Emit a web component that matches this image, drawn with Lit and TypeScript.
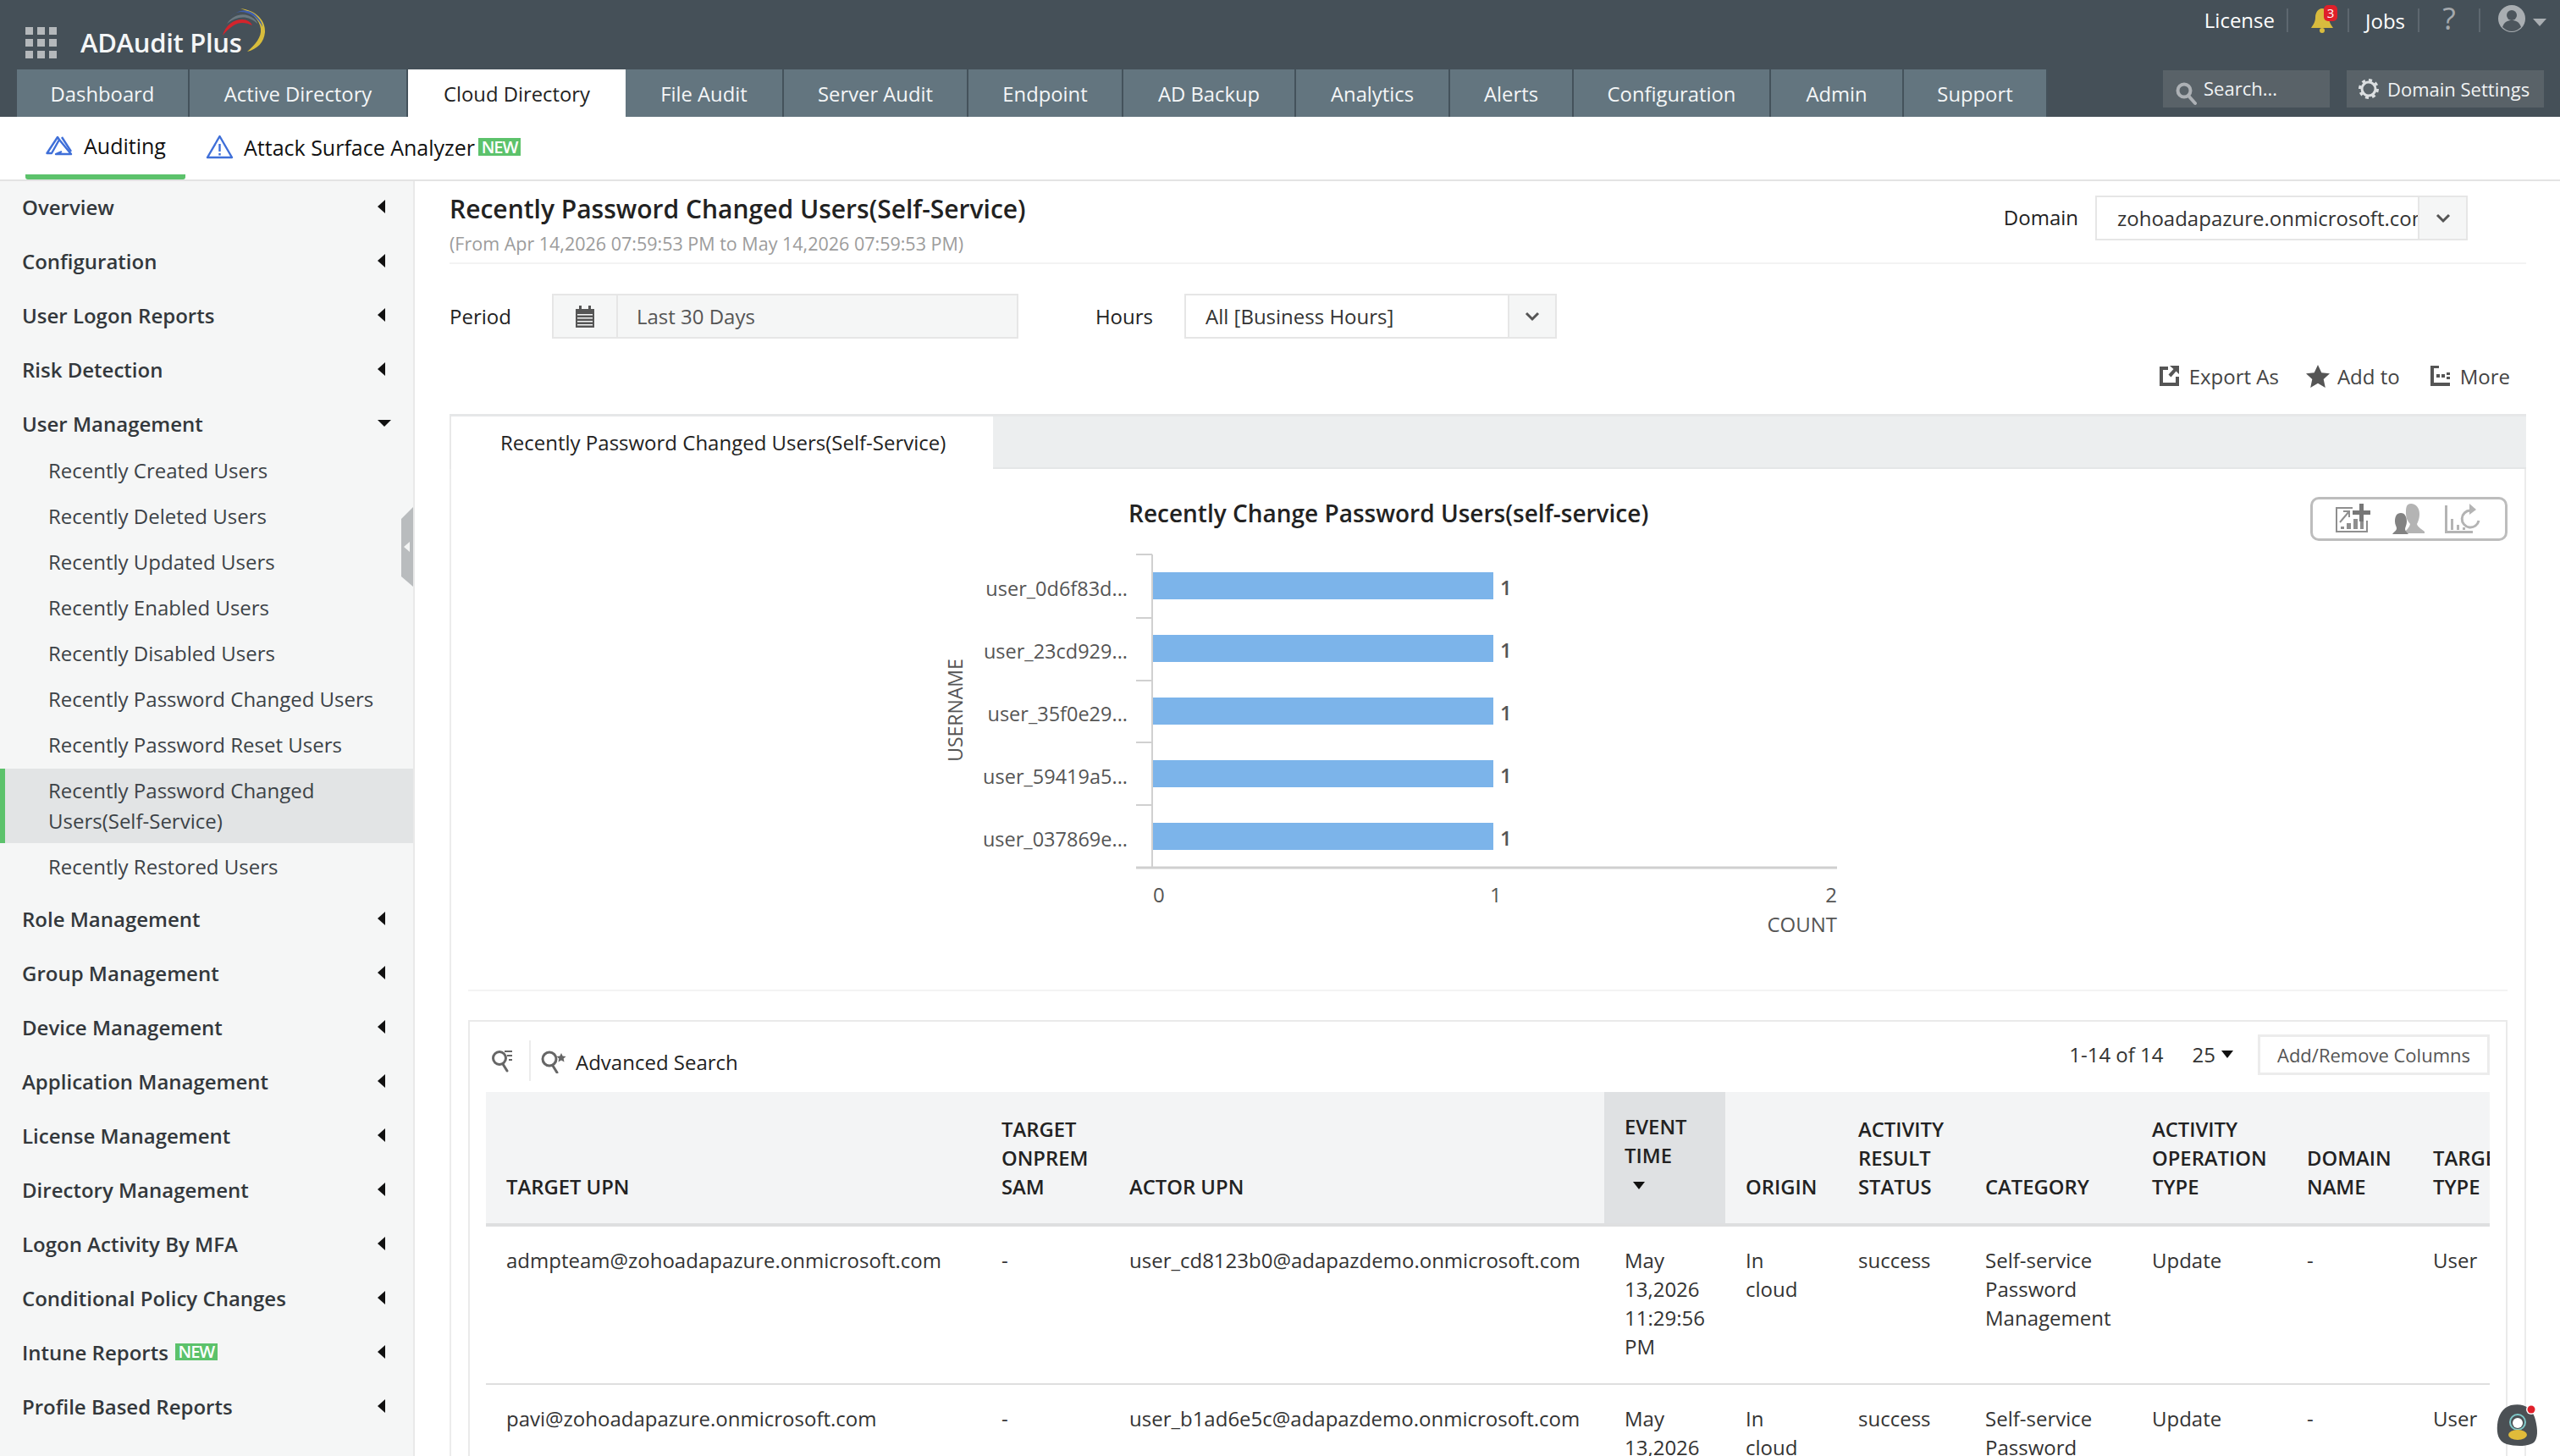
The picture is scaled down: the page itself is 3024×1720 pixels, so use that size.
import { LitElement, html, css, svg } from 'lit';
import { customElement } from 'lit/decorators.js';

const topTabs = ['Dashboard', 'Active Directory', 'Cloud Directory', 'File Audit', 'Server Audit', 'Endpoint', 'AD Backup', 'Analytics', 'Alerts', 'Configuration', 'Admin', 'Support'];
const groupsBefore = ['Overview', 'Configuration', 'User Logon Reports', 'Risk Detection'];
const subItems = ['Recently Created Users', 'Recently Deleted Users', 'Recently Updated Users', 'Recently Enabled Users', 'Recently Disabled Users', 'Recently Password Changed Users', 'Recently Password Reset Users'];
const groupsAfter = ['Role Management', 'Group Management', 'Device Management', 'Application Management', 'License Management', 'Directory Management', 'Logon Activity By MFA', 'Conditional Policy Changes', 'Intune Reports', 'Profile Based Reports'];
const bars = [
  { name: 'user_0d6f83d...', y: 676 },
  { name: 'user_23cd929...', y: 750 },
  { name: 'user_35f0e29...', y: 824 },
  { name: 'user_59419a5...', y: 898 },
  { name: 'user_037869e...', y: 972 },
];
const rows = [
  { upn: 'admpteam@zohoadapazure.onmicrosoft.com', actor: 'user_cd8123b0@adapazdemo.onmicrosoft.com' },
  { upn: 'pavi@zohoadapazure.onmicrosoft.com', actor: 'user_b1ad6e5c@adapazdemo.onmicrosoft.com' },
];

@customElement('app-root')
export class AppRoot extends LitElement {
  static styles = css`
    :host {
      display: block;
      width: 3024px;
      height: 1720px;
      overflow: hidden;
      position: relative;
      background: #fff;
      font-family: 'Open Sans', sans-serif;
      font-size: 24px;
      color: #333;
    }
    svg { display: block; flex: none; }

    .header { height: 138px; background: #455058; display: flex; flex-direction: column; }
    .brand-row { height: 82px; display: flex; }
    .grid-icon { margin: 32px 0 0 30px; }
    .logo { display: flex; margin-left: 28px; position: relative; }
    .logo-text { font-size: 31px; font-weight: 600; color: #f4f6f7; margin-top: 29px; line-height: 42px; letter-spacing: -0.3px; }
    .logo svg { margin: 8px 0 0 -24px; }
    .tools { margin-left: auto; display: flex; align-items: flex-start; height: 44px; color: #fff; font-size: 24px; }
    .tool { height: 28px; margin-top: 10px; display: flex; align-items: center; border-right: 2px solid #5d676f; }
    .license { padding-right: 14px; line-height: 24px; }
    .bell { width: 72px; padding-left: 26px; box-sizing: border-box; position: relative; }
    .bell-badge { position: absolute; left: 42px; top: -4px; width: 16px; height: 19px; background: #e0202a; border-radius: 5px; color: #fff; font-size: 15px; line-height: 19px; text-align: center; }
    .jobs { width: 83px; padding-left: 19px; box-sizing: border-box; }
    .help { width: 72px; justify-content: center; color: #a4a9ad; font-size: 36px; line-height: 28px; padding-bottom: 4px; box-sizing: border-box; }
    .avatar { margin: 6px 0 0 21px; }
    .caret { margin: 22px 16px 0 9px; }

    .tabs-row { height: 56px; display: flex; }
    .tabs { margin-left: 20px; display: grid; grid-template-columns: 204px 258px 257px 187px 218px 183px 204px 182px 146px 233px 157px 170px; }
    .tab { background: #63757f; border-right: 2px solid #44525b; color: #f4f6f7; font-size: 23.8px; display: flex; align-items: center; justify-content: center; padding-top: 2px; box-sizing: border-box; }
    .tab.on { background: #fff; color: #222; border-right: none; }
    .top-actions { margin-left: auto; display: flex; gap: 20px; padding: 1px 19px 0 0; }
    .top-btn { height: 44px; background: #596268; display: flex; align-items: center; color: #f1f3f4; font-size: 22px; }
    .top-search { width: 197px; padding-left: 15px; box-sizing: border-box; gap: 8px; }
    .top-search span { margin-top: -2px; }
    .top-domain { width: 233px; padding-left: 14px; box-sizing: border-box; gap: 10px; }

    .subnav { height: 76px; box-sizing: border-box; border-bottom: 2px solid #e3e3e3; display: flex; padding-left: 30px; position: relative; }
    .sub-tab { display: flex; align-items: center; gap: 13px; font-weight: 500; color: #111; font-size: 25px; height: 74px; padding-bottom: 3px; box-sizing: border-box; }
    .sub-tab.on { width: 189px; padding-left: 24px; border-bottom: 6px solid #5cc26b; border-radius: 0 0 3px 3px; padding-bottom: 0; }
    .sub-tab.second { margin-left: 24px; gap: 12px; }
    .new { display: inline-block; background: #5cc26b; color: #fff; font-weight: 600; font-size: 20px; line-height: 21px; height: 21px; width: 50px; text-align: center; letter-spacing: -1px; }
    .sub-tab .new { margin-left: -8px; }

    .body { display: flex; height: 1506px; }
    .sidebar { width: 488px; flex: none; background: #f5f6f6; border-right: 2px solid #e9e9e9; position: relative; }
    .nav { margin-top: -2px; }
    .group { height: 64px; display: flex; align-items: center; padding: 0 33px 0 26px; font-weight: 600; font-size: 24px; color: #33383c; }
    .group .new { margin-left: 8px; height: 20px; line-height: 20px; }
    .arrow-left { margin-left: auto; width: 0; height: 0; border-style: solid; border-width: 8px 9px 8px 0; border-color: transparent #111 transparent transparent; }
    .arrow-down { margin: 0 -7px 0 auto; width: 0; height: 0; border-style: solid; border-width: 8px 8px 0; border-color: #111 transparent transparent; }
    .subs { margin: -3px 0 2px; }
    .sub { height: 54px; box-sizing: border-box; padding: 0 0 2px 57px; display: flex; align-items: center; color: #3c4247; font-size: 24px; }
    .sub.sel { height: 88px; margin: 1px 0; background: #e2e4e5; border-left: 6px solid #5cc26b; padding: 0 0 0 51px; line-height: 36px; }
    .handle { position: absolute; right: 0; top: 385px; }

    .main { flex: 1; padding: 0 40px 0 41px; min-width: 0; }
    .head { display: flex; height: 98px; box-sizing: border-box; border-bottom: 2px solid #f3f3f3; }
    .title { font-size: 30px; font-weight: 600; color: #222; line-height: 36px; margin-top: 15px; }
    .range { font-size: 21.5px; color: #9c9c9c; line-height: 30px; margin-top: 8px; }
    .domain { margin-left: auto; display: flex; align-items: flex-start; padding: 17px 69px 0 0; }
    .domain label { line-height: 52px; margin-right: 20px; color: #222; }
    .select { display: flex; height: 53px; box-sizing: border-box; border: 2px solid #e6e6e6; background: #fff; }
    .select .val { flex: 1; overflow: hidden; white-space: nowrap; line-height: 49px; }
    .select .drop { background: #f5f6f6; border-left: 2px solid #e6e6e6; display: flex; align-items: center; justify-content: center; }
    .domain .select { width: 440px; }
    .domain .val { padding-left: 24px; color: #333; }
    .domain .drop { width: 55px; flex: none; }

    .filters { display: flex; align-items: center; margin-top: 35px; height: 53px; }
    .filters label { color: #222; }
    .period { width: 551px; margin-left: 48px; background: #f5f6f6; }
    .cal { width: 74px; display: flex; align-items: center; justify-content: center; border-right: 2px solid #e6e6e6; }
    .period .val { padding-left: 22px; color: #555; }
    .hours-label { margin-left: 91px; }
    .hours { width: 440px; margin-left: 37px; }
    .hours .val { padding-left: 23px; color: #333; }
    .hours .drop { width: 54px; flex: none; }

    .actions { display: flex; justify-content: flex-end; align-items: center; height: 34px; margin-top: 27px; padding-right: 19px; color: #444; }
    .action { display: flex; align-items: center; gap: 12px; margin-left: 32px; }
    .action.tight { gap: 9px; }
    .action.last { margin-left: 36px; }

    .report-tabs { margin-top: 28px; height: 65px; box-sizing: border-box; background: #eceeef; border-top: 3px solid #e6e7e8; border-bottom: 2px solid #e4e6e7; display: flex; }
    .report-tab { width: 642px; height: 63px; box-sizing: border-box; background: #fff; border-left: 2px solid #e8e8e8; padding: 0 0 3px 58px; display: flex; align-items: center; color: #222; margin-bottom: -3px; font-size: 24px; }
    .panel { border: solid #ececec; border-width: 0 2px; height: 1200px; position: relative; }

    .chart { height: 617px; margin: 0 20px; box-sizing: border-box; border-bottom: 2px solid #f3f3f3; padding-top: 34px; }
    .chart-title { font-size: 28px; font-weight: 600; color: #222; line-height: 36px; padding-left: 780px; white-space: nowrap; }
    .chart svg { margin: 16px 0 0 537px; }
    .chart text { font-family: 'Open Sans', sans-serif; fill: #555; font-size: 24px; }
    .chart text.name { font-size: 23.5px; }
    .chart-tools { position: absolute; top: 33px; right: 20px; width: 233px; height: 52px; box-sizing: border-box; border: 3px solid #bdbdbd; border-radius: 10px; display: flex; align-items: center; justify-content: center; gap: 24px; padding-right: 4px; }

    .grid-box { margin: 34px 20px 0; border: 2px solid #eaeaea; padding: 0 19px; }
    .toolbar { height: 83px; display: flex; align-items: center; }
    .search-ic { margin-left: 6px; height: 48px; padding-right: 19px; border-right: 2px solid #ececec; display: flex; align-items: center; margin-top: 8px; }
    .adv { display: flex; align-items: center; gap: 10px; margin: 11px 0 0 11px; color: #222; }
    .pager { margin-left: auto; display: flex; align-items: center; color: #333; margin-top: -6px; }
    .per-page { margin-left: 34px; display: flex; align-items: center; gap: 7px; }
    .tri { width: 0; height: 0; border-style: solid; border-width: 9px 7px 0; border-color: #111 transparent transparent; }
    .col-btn { margin-left: 29px; width: 274px; height: 48px; box-sizing: border-box; border: 3px solid #ececec; text-align: center; line-height: 42px; color: #555; font-size: 22px; }
    .scroll { overflow: hidden; }
    table { border-collapse: collapse; table-layout: fixed; width: 2386px; }
    col:nth-child(1), col:nth-child(3) { width: 585px; }
    col:nth-child(2) { width: 151px; }
    col:nth-child(4) { width: 143px; }
    col:nth-child(5) { width: 133px; }
    col:nth-child(6) { width: 150px; }
    col:nth-child(7) { width: 197px; }
    col:nth-child(8) { width: 183px; }
    col:nth-child(9) { width: 149px; }
    col:nth-child(10) { width: 110px; }
    th { background: #f3f4f5; border-bottom: 4px solid #dedfe0; height: 157px; box-sizing: border-box; padding: 0 0 26px 24px; vertical-align: bottom; text-align: left; font-weight: 600; font-size: 23.8px; line-height: 34px; color: #222; white-space: nowrap; }
    th.sorted { background: #dfe1e3; vertical-align: top; padding: 24px 0 0 24px; }
    th .tri { display: block; margin: 14px 0 0 10px; }
    td { padding: 23px 0 26px 24px; vertical-align: top; font-size: 24px; line-height: 34px; color: #333; white-space: nowrap; border-bottom: 2px solid #dfdfdf; }
    .bot { position: absolute; left: 2948px; top: 1657px; }
  `;

  private gridIcon() {
    const cells = [];
    for (let r = 0; r < 3; r++) {
      for (let c = 0; c < 3; c++) {
        cells.push(svg`<rect x=${c * 14} y=${r * 14} width="9" height="9" fill="#b4b8bb"></rect>`);
      }
    }
    return html`<svg class="grid-icon" width="37" height="37" viewBox="0 0 37 37">${cells}</svg>`;
  }

  private chevron() {
    return html`<svg width="20" height="12" viewBox="0 0 20 12"><path d="M3 2l7 7 7-7" fill="none" stroke="#555" stroke-width="3"></path></svg>`;
  }

  private renderChart() {
    const ticks = [655, 730, 804, 877, 951];
    return html`<svg width="1100" height="470" viewBox="1090 640 1100 470">
      <line x1="1361" y1="655" x2="1361" y2="1026" stroke="#d0d0d0" stroke-width="2"></line>
      <line x1="1342" y1="1025" x2="2170" y2="1025" stroke="#cfcfcf" stroke-width="3"></line>
      ${ticks.map((y) => svg`<line x1="1342" y1=${y} x2="1361" y2=${y} stroke="#d0d0d0" stroke-width="2"></line>`)}
      ${bars.map((b) => svg`
        <rect x="1362" y=${b.y} width="402" height="32" fill="#7cb4ea"></rect>
        <text class="name" x="1332" y=${b.y + 28} text-anchor="end">${b.name}</text>
        <text x="1772" y=${b.y + 27} style="font-weight:600">1</text>
      `)}
      <text x="1362" y="1066">0</text>
      <text x="1760" y="1066">1</text>
      <text x="2170" y="1066" text-anchor="end">2</text>
      <text x="2170" y="1101" text-anchor="end">COUNT</text>
      <text transform="translate(1137 839) rotate(-90)" text-anchor="middle" style="font-size:23px">USERNAME</text>
    </svg>`;
  }

  private renderHeader() {
    return html`<div class="header">
      <div class="brand-row">
        ${this.gridIcon()}
        <div class="logo">
          <span class="logo-text">ADAudit Plus</span>
          <svg width="54" height="56" viewBox="0 0 54 56">
            <path d="M22 2C40 4 52 16 51 30C50 42 42 50 30 53C40 44 47 36 46 26C45 16 35 6 22 2Z" fill="#d8bd3c"></path>
            <path d="M10 12C20 2 34 2 42 12C46 16 48 20 48 24C44 14 34 6 22 6C18 6 14 8 10 12Z" fill="#3f5fb0"></path>
            <path d="M6 20C14 8 28 6 38 14C40 16 42 18 42 20C32 10 18 10 6 20Z" fill="#6b7880"></path>
            <path d="M1 34C4 22 14 15 24 15C30 15 34 18 36 22C28 18 20 18 14 22C8 26 4 30 1 34Z" fill="#d3242c"></path>
          </svg>
        </div>
        <div class="tools">
          <div class="tool license">License</div>
          <div class="tool bell">
            <svg width="28" height="30" viewBox="0 0 28 30"><path d="M14 1c5 0 8 5 8 11 0 5 3 9 5 12H1c2-3 5-7 5-12 0-6 3-11 8-11z" fill="#d8bb3e"></path><circle cx="14" cy="27" r="3" fill="#d8bb3e"></circle></svg>
            <span class="bell-badge">3</span>
          </div>
          <div class="tool jobs">Jobs</div>
          <div class="tool help">?</div>
          <svg class="avatar" width="32" height="32" viewBox="0 0 32 32">
            <circle cx="16" cy="16" r="16" fill="#a9aeb2"></circle>
            <circle cx="16" cy="12" r="6" fill="#4d565d"></circle>
            <path d="M5 26c2-6 6-8 11-8s9 2 11 8c-3 3-7 5-11 5s-8-2-11-5z" fill="#4d565d"></path>
          </svg>
          <svg class="caret" width="16" height="9" viewBox="0 0 16 9"><path d="M0 0h16L8 9z" fill="#a9aeb2"></path></svg>
        </div>
      </div>
      <div class="tabs-row">
        <div class="tabs">
          ${topTabs.map((t) => html`<div class="tab ${t === 'Cloud Directory' ? 'on' : ''}">${t}</div>`)}
        </div>
        <div class="top-actions">
          <div class="top-btn top-search">
            <svg width="25" height="28" viewBox="0 0 25 28" style="margin-top:12px"><circle cx="10" cy="10" r="7.5" fill="none" stroke="#adb1b5" stroke-width="4"></circle><path d="M15 16l8 9" stroke="#adb1b5" stroke-width="4" stroke-linecap="round"></path></svg>
            <span>Search...</span>
          </div>
          <div class="top-btn top-domain">
            <svg width="24" height="26" viewBox="0 0 24 26"><circle cx="12" cy="13" r="8" fill="none" stroke="#dcdfe1" stroke-width="3"></circle><circle cx="12" cy="13" r="10.5" fill="none" stroke="#dcdfe1" stroke-width="3" stroke-dasharray="4 4.2"></circle></svg>
            <span>Domain Settings</span>
          </div>
        </div>
      </div>
    </div>`;
  }

  private renderSubnav() {
    return html`<div class="subnav">
      <div class="sub-tab on">
        <svg width="32" height="26" viewBox="0 0 32 26" fill="none" stroke="#3f6fd8" stroke-width="2.4" stroke-linejoin="round">
          <path d="M1.5 22L14 3l2 3L7 22z"></path>
          <path d="M16 6l14 17H12l7-3"></path>
          <path d="M19 3l11 17"></path>
        </svg>
        Auditing
      </div>
      <div class="sub-tab second">
        <svg width="33" height="29" viewBox="0 0 33 29" fill="none" stroke="#3f6fd8" stroke-width="2.4" stroke-linejoin="round">
          <path d="M16.5 2L31 27H2z"></path>
          <path d="M16.5 11v9M16.5 22v2.5"></path>
        </svg>
        Attack Surface Analyzer <span class="new">NEW</span>
      </div>
    </div>`;
  }

  private renderSidebar() {
    return html`<div class="sidebar">
      <div class="nav">
        ${groupsBefore.map((g) => html`<div class="group">${g}<span class="arrow-left"></span></div>`)}
        <div class="group">User Management<span class="arrow-down"></span></div>
        <div class="subs">
          ${subItems.map((s) => html`<div class="sub">${s}</div>`)}
          <div class="sub sel">Recently Password Changed<br />Users(Self-Service)</div>
          <div class="sub">Recently Restored Users</div>
        </div>
        ${groupsAfter.map((g) => html`<div class="group">${g}${g === 'Intune Reports' ? html`<span class="new">NEW</span>` : ''}<span class="arrow-left"></span></div>`)}
      </div>
      <svg class="handle" width="14" height="94" viewBox="0 0 14 94">
        <path d="M0 14L14 0v94L0 82z" fill="#b9bcbe"></path>
        <path d="M10 41v12l-7-6z" fill="#f3f4f4"></path>
      </svg>
    </div>`;
  }

  private renderMain() {
    return html`<div class="main">
      <div class="head">
        <div>
          <div class="title">Recently Password Changed Users(Self-Service)</div>
          <div class="range">(From Apr 14,2026 07:59:53 PM to May 14,2026 07:59:53 PM)</div>
        </div>
        <div class="domain">
          <label>Domain</label>
          <div class="select">
            <div class="val">zohoadapazure.onmicrosoft.com</div>
            <div class="drop">${this.chevron()}</div>
          </div>
        </div>
      </div>

      <div class="filters">
        <label>Period</label>
        <div class="select period">
          <div class="cal">
            <svg width="22" height="26" viewBox="0 0 22 26">
              <path d="M0 4h4V0h3v4h8V0h3v4h4v22H0z" fill="#555"></path>
              <path d="M2 10h18v1.600H2zM2 14h18v1.600H2zM2 18h18v1.600H2zM2 22h18v1.600H2z" fill="#f5f6f6"></path>
            </svg>
          </div>
          <div class="val">Last 30 Days</div>
        </div>
        <label class="hours-label">Hours</label>
        <div class="select hours">
          <div class="val">All [Business Hours]</div>
          <div class="drop">${this.chevron()}</div>
        </div>
      </div>

      <div class="actions">
        <div class="action">
          <svg width="23" height="24" viewBox="0 0 23 24"><path d="M0 1h10v4H4v15h15v-7h4v11H0z" fill="#555"></path><path d="M12 0h11v10l-3.500-3.500-6 7-3-3 6-6.500z" fill="#555"></path></svg>
          Export As
        </div>
        <div class="action tight">
          <svg width="28" height="27" viewBox="0 0 28 27"><path d="M14 0l4.300 9.300 9.700 1-7.300 6.600 2.100 10L14 21.800l-8.800 5.100 2.100-10L0 10.300l9.700-1z" fill="#555"></path></svg>
          Add to
        </div>
        <div class="action last">
          <svg width="23" height="24" viewBox="0 0 23 24"><path d="M0 0h10v3H4v17h19v4H0z" fill="#555"></path><path d="M7 10h4v4H7zM13 10h4v4h-4zM19 8h4v3h-4zM19 13h4v3h-4z" fill="#555"></path></svg>
          More
        </div>
      </div>

      <div class="report-tabs">
        <div class="report-tab">Recently Password Changed Users(Self-Service)</div>
      </div>

      <div class="panel">
        <div class="chart">
          <div class="chart-title">Recently Change Password Users(self-service)</div>
          ${this.renderChart()}
        </div>
        <div class="chart-tools">
          <svg width="44" height="36" viewBox="0 0 44 36" fill="#8f8f8f">
            <path d="M1 4h20v2H3v26h34V20h2v14H1z"></path>
            <path d="M6 22L17 9m-7 0h7v7" fill="none" stroke="#8f8f8f" stroke-width="2"></path>
            <path d="M7 27h4v3H7zM14 23h5v7h-5zM22 18h5v12h-5zM30 21h4v9h-4z"></path>
            <path d="M29 0h5v8h8v5h-8v8h-5v-8h-8V8h8z" fill="#777"></path>
          </svg>
          <svg width="38" height="38" viewBox="0 0 38 38">
            <path d="M22 1c6 0 10 5 10 12 0 6-2 10-3 12 1 4 6 6 9 9v2H14c2-4 6-6 7-11-3-3-5-7-5-12 0-7 0-12 6-12z" fill="#b4b4b4"></path>
            <path d="M10 12c5 0 7 5 7 10 0 4-2 7-2 9 0 2 2 4 4 6H0c2-3 5-4 5-7 0-2-2-4-2-8 0-6 2-10 7-10z" fill="#828282"></path>
          </svg>
          <svg width="42" height="36" viewBox="0 0 42 36" fill="#b4b4b4">
            <path d="M0 2h3v30h30v3H0z"></path>
            <path d="M7 18h3v13H7zM14 25h3v6h-3zM21 28h3v3h-3z"></path>
            <path d="M30 8a10 10 0 1 0 10 12" fill="none" stroke="#b4b4b4" stroke-width="3"></path>
            <path d="M29 0l8 7-8 6z"></path>
          </svg>
        </div>

        <div class="grid-box">
          <div class="toolbar">
            <div class="search-ic">
              <svg width="26" height="28" viewBox="0 0 26 28" fill="none" stroke="#666" stroke-width="3">
                <circle cx="10" cy="11" r="7.500"></circle>
                <path d="M14 18l5 8" stroke-linecap="round"></path>
                <path d="M16 3h9M19 8h6M21 13h4" stroke-width="2"></path>
              </svg>
            </div>
            <div class="adv">
              <svg width="32" height="28" viewBox="0 0 32 28">
                <circle cx="11" cy="11" r="8" fill="none" stroke="#666" stroke-width="3"></circle>
                <path d="M15 19l5 8" stroke="#666" stroke-width="3" stroke-linecap="round"></path>
                <path d="M25 4l1.700 3.600 3.900.4-2.900 2.600.8 3.900-3.500-2-3.500 2 .8-3.900L19.400 8l3.900-.4z" fill="#666"></path>
              </svg>
              Advanced Search
            </div>
            <div class="pager">
              1-14 of 14
              <div class="per-page">25<span class="tri"></span></div>
              <div class="col-btn">Add/Remove Columns</div>
            </div>
          </div>
          <div class="scroll">
            <table>
              <colgroup><col /><col /><col /><col /><col /><col /><col /><col /><col /><col /></colgroup>
              <thead>
                <tr>
                  <th>TARGET UPN</th>
                  <th>TARGET<br />ONPREM<br />SAM</th>
                  <th>ACTOR UPN</th>
                  <th class="sorted">EVENT<br />TIME<span class="tri"></span></th>
                  <th>ORIGIN</th>
                  <th>ACTIVITY<br />RESULT<br />STATUS</th>
                  <th>CATEGORY</th>
                  <th>ACTIVITY<br />OPERATION<br />TYPE</th>
                  <th>DOMAIN<br />NAME</th>
                  <th>TARGET<br />TYPE</th>
                </tr>
              </thead>
              <tbody>
                ${rows.map((r) => html`<tr>
                  <td>${r.upn}</td>
                  <td>-</td>
                  <td>${r.actor}</td>
                  <td>May<br />13,2026<br />11:29:56<br />PM</td>
                  <td>In<br />cloud</td>
                  <td>success</td>
                  <td>Self-service<br />Password<br />Management</td>
                  <td>Update</td>
                  <td>-</td>
                  <td>User</td>
                </tr>`)}
              </tbody>
            </table>
          </div>
        </div>
      </div>
    </div>`;
  }

  render() {
    return html`
      ${this.renderHeader()}
      ${this.renderSubnav()}
      <div class="body">
        ${this.renderSidebar()}
        ${this.renderMain()}
      </div>
      <svg class="bot" width="54" height="54" viewBox="0 0 54 54">
        <path d="M18 3c14-3 24 2 28 14 3 10 5 22 0 29-5 6-22 6-33 3C3 46 1 36 2 26 3 15 8 6 18 3z" fill="#4b5054"></path>
        <circle cx="26" cy="23" r="9" fill="none" stroke="#7fc8c8" stroke-width="2"></circle>
        <circle cx="26" cy="24" r="6" fill="#fff"></circle>
        <ellipse cx="26" cy="38" rx="11" ry="6" fill="#e0bb3a"></ellipse>
        <circle cx="42" cy="8" r="6" fill="#fff"></circle>
        <circle cx="42" cy="8" r="4.500" fill="#e0202a"></circle>
      </svg>
    `;
  }
}
